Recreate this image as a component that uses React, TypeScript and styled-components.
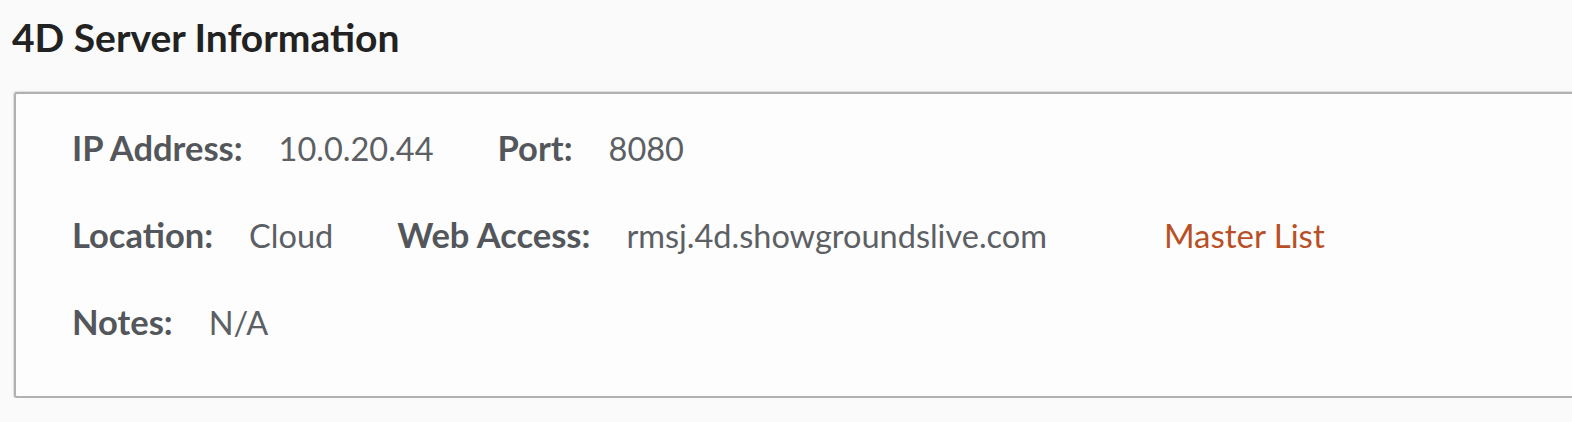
import styled, { createGlobalStyle } from "styled-components";

const GlobalStyle = createGlobalStyle`
  html, body {
    margin: 0;
    background: #fafafa;
    overflow: hidden;
  }
  body {
    font-family: Lato, "Noto Sans", sans-serif;
  }
`;

const Page = styled.div`
  padding: 13px 0 0 12px;
`;

const Title = styled.h2`
  margin: 0 0 31px;
  font-size: 39px;
  line-height: 48px;
  font-weight: 700;
  color: #222;
`;

const Card = styled.section`
  box-sizing: border-box;
  width: calc(100% + 40px);
  margin-left: 2px;
  padding: 32px 0 51px 56px;
  background: #fdfdfd;
  border: 2px solid #b1b1b1;
  border-radius: 3px;
  box-shadow: 0 0 1px 1px #dedede;
  display: flex;
  flex-direction: column;
  gap: 42px;
`;

const Row = styled.div`
  display: flex;
  align-items: baseline;
  gap: 64px;
  line-height: 44px;
  white-space: nowrap;
`;

const Field = styled.div`
  display: flex;
  align-items: baseline;
  gap: 36px;
`;

const Label = styled.span`
  font-size: 34.5px;
  font-weight: 700;
  color: #53575b;
`;

const Value = styled.span`
  font-size: 32.5px;
  color: #5c6064;
`;

const Link = styled.a`
  margin-left: 53px;
  font-size: 33px;
  color: #b94f25;
  text-decoration: none;
`;

type Item = { label: string; value: string };

const rows: Item[][] = [
  [
    { label: "IP Address:", value: "10.0.20.44" },
    { label: "Port:", value: "8080" },
  ],
  [
    { label: "Location:", value: "Cloud" },
    { label: "Web Access:", value: "rmsj.4d.showgroundslive.com" },
  ],
  [{ label: "Notes:", value: "N/A" }],
];

export default function App() {
  return (
    <Page>
      <GlobalStyle />
      <Title>4D Server Information</Title>
      <Card>
        {rows.map((row, i) => (
          <Row key={i}>
            {row.map((item) => (
              <Field key={item.label}>
                <Label>{item.label}</Label>
                <Value>{item.value}</Value>
              </Field>
            ))}
            {i === 1 && <Link href="#">Master List</Link>}
          </Row>
        ))}
      </Card>
    </Page>
  );
}
